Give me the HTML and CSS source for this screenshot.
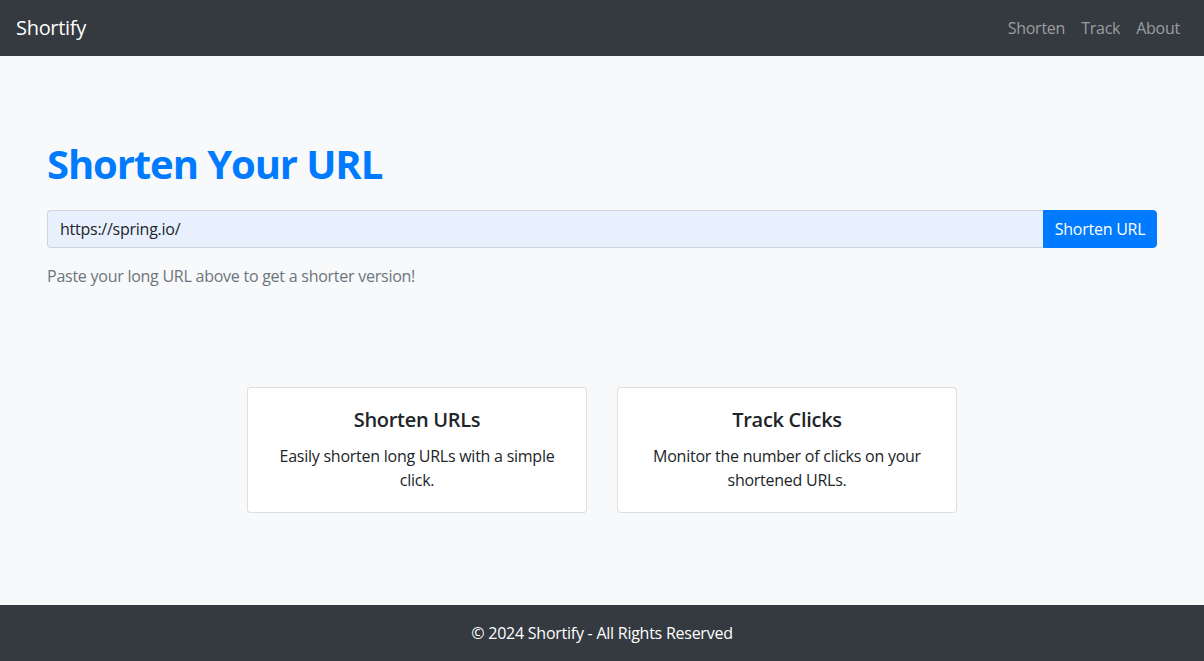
FILE: index.html
```html
<!DOCTYPE html>
<html lang="en">
<head>
<meta charset="utf-8">
<title>Shortify</title>
<link rel="stylesheet" href="styles.css">
</head>
<body>
<nav class="navbar">
  <a class="brand" href="#">Shortify</a>
  <ul class="nav-links">
    <li><a href="#">Shorten</a></li>
    <li><a href="#">Track</a></li>
    <li><a href="#">About</a></li>
  </ul>
</nav>
<main class="main">
  <div class="container">
    <h1 class="title">Shorten Your URL</h1>
    <form class="input-group">
      <input class="url-input" type="text" value="https://spring.io/">
      <button class="btn" type="button">Shorten URL</button>
    </form>
    <p class="help">Paste your long URL above to get a shorter version!</p>
    <div class="cards">
      <div class="card">
        <h5 class="card-title">Shorten URLs</h5>
        <p class="card-text">Easily shorten long URLs with a simple click.</p>
      </div>
      <div class="card">
        <h5 class="card-title">Track Clicks</h5>
        <p class="card-text">Monitor the number of clicks on your shortened URLs.</p>
      </div>
    </div>
  </div>
</main>
<footer class="footer">© 2024 Shortify - All Rights Reserved</footer>
</body>
</html>
```
FILE: styles.css
```css
* { box-sizing: border-box; }
html, body { margin: 0; padding: 0; }
body {
  font-family: "Open Sans", "Noto Sans", sans-serif;
  font-size: 16px;
  line-height: 24px;
  letter-spacing: -0.25px;
  color: #212529;
  background: #f8f9fa;
}
.navbar {
  height: 56px;
  background: #343a40;
  display: flex;
  align-items: center;
  justify-content: space-between;
  padding: 0 16px;
}
.brand {
  color: #fff;
  font-size: 20px;
  text-decoration: none;
  line-height: 30px;
  letter-spacing: -0.3px;
}
.nav-links {
  list-style: none;
  margin: 0;
  padding: 0;
  display: flex;
}
.nav-links a {
  display: block;
  padding: 8px;
  color: rgba(255,255,255,.5);
  text-decoration: none;
}
.main {
  height: 549px;
  padding-top: 84px;
}
.container {
  width: 1140px;
  margin: 0 auto;
  padding: 0 15px;
}
.title {
  margin: 0 0 22px;
  font-size: 40px;
  line-height: 48px;
  font-weight: 700;
  letter-spacing: -1.1px;
  color: #007bff;
}
.input-group {
  display: flex;
  height: 38px;
  margin: 0;
}
.url-input {
  flex: 1;
  height: 38px;
  border: 1px solid #ced4da;
  border-right: none;
  border-radius: 4px 0 0 4px;
  background: #e8f0fe;
  font: inherit;
  letter-spacing: inherit;
  color: #212529;
  padding: 6px 12px;
  outline: none;
}
.btn {
  width: 114px;
  height: 38px;
  border: 1px solid #007bff;
  background: #007bff;
  color: #fff;
  font: inherit;
  letter-spacing: inherit;
  border-radius: 0 4px 4px 0;
  padding: 0;
}
.help {
  margin: 16px 0 0;
  color: #6c757d;
}
.cards {
  display: flex;
  justify-content: center;
  gap: 30px;
  margin-top: 99px;
}
.card {
  width: 340px;
  background: #fff;
  border: 1px solid rgba(0,0,0,.125);
  border-radius: 4px;
  padding: 20px;
  text-align: center;
}
.card-title {
  margin: 0 0 12px;
  font-size: 20px;
  line-height: 24px;
  font-weight: 600;
  letter-spacing: -0.3px;
}
.card-text { margin: 0; }
.footer {
  height: 56px;
  background: #343a40;
  color: #fff;
  display: flex;
  align-items: center;
  justify-content: center;
}
```
